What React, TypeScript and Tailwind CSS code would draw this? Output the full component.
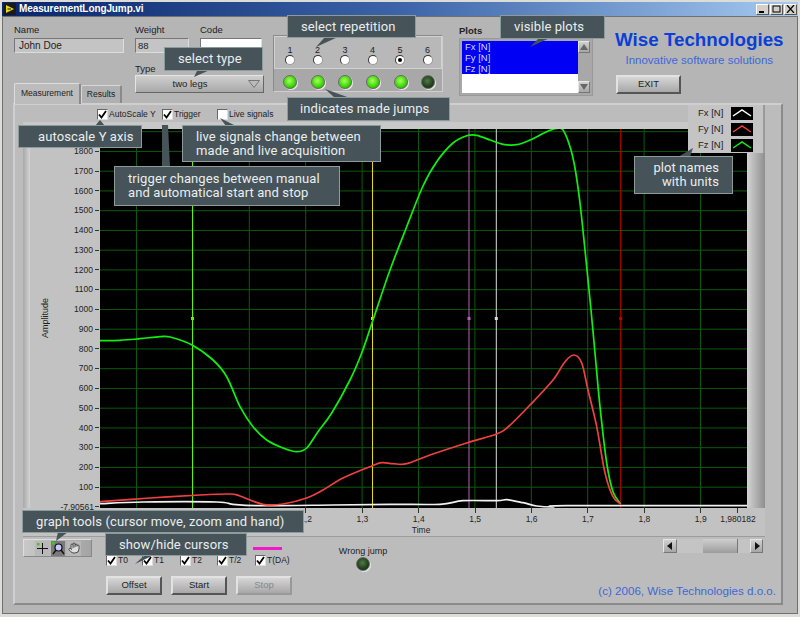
import { Hand } from "lucide-react";

// curve points are read off the graph, in page pixels
const fz = [[100,340.7],[120,340.3],[140,338.7],[160,336.7],[170,337],[192,345],[213,360],[226.7,376.7],[240,406.7],[253,426.7],[266.7,440],[283,448],[296.7,451.7],[306.7,448],[318,431.7],[331.7,413],[350,380],[361.7,353],[373,320],[390,270],[406.7,226.7],[423,186],[436.7,161.7],[453,143],[466.7,135.7],[476.7,135.3],[490,140],[503,144.3],[516.7,144.7],[530,140],[546.7,131.7],[556.7,128.5],[563,130],[570,146.7],[575,168],[580,203],[585,250],[591,310],[595,353],[600,406.7],[606.7,463],[613,491.7],[620.7,504]];
const fy = [[100,501.7],[150,498],[200,495],[230,494],[240,496],[263,504.3],[283,504],[306.7,498],[323,490],[343,478],[371.7,466],[381.7,462.7],[393,463.7],[406.7,463.7],[430,455],[466.7,443],[496.7,434],[508,427],[530,405],[553,380],[565,361.7],[574,355],[581.7,363],[588,390],[596.7,426.7],[605,473],[613,496.7],[620.7,504]];
const fx = [[100,503.7],[143,502],[216.7,502],[233,504.3],[263,505.7],[333,505],[390,504.3],[440,504.3],[463,500.7],[497,500.7],[507,499.7],[523,502.7],[536.7,506],[553,507],[566.7,505.7],[747,505.7]];

function smooth(p: number[][]) {
  let d = `M${p[0][0]} ${p[0][1]}`;
  for (let i = 0; i < p.length - 1; i++) {
    const a = p[Math.max(i - 1, 0)];
    const b = p[i];
    const c = p[i + 1];
    const e = p[Math.min(i + 2, p.length - 1)];
    d += ` C${b[0] + (c[0] - a[0]) / 6} ${b[1] + (c[1] - a[1]) / 6} ${c[0] - (e[0] - b[0]) / 6} ${c[1] - (e[1] - b[1]) / 6} ${c[0]} ${c[1]}`;
  }
  return d;
}

const yLabels = ["1800","1700","1600","1500","1400","1300","1200","1100","1000","900","800","700","600","500","400","300","200","100"];
const xLabels = ["1,2","1,3","1,4","1,5","1,6","1,7","1,8","1,9"];
const reps = [1, 2, 3, 4, 5, 6];

function Check({ label, checked = true, className }: { label: string; checked?: boolean; className: string }) {
  return (
    <div className={`flex items-center gap-[1px] ${className}`}>
      <span className="w-[11px] h-[11px] bg-white border border-t-[#666] border-l-[#666] border-r-[#ddd] border-b-[#ddd] flex items-center justify-center shrink-0">
        {checked && (
          <svg width="9" height="9" viewBox="0 0 9 9">
            <path d="M1 4.5 L3.5 7.5 L8 1" fill="none" stroke="#000" strokeWidth="1.8" />
          </svg>
        )}
      </span>
      <span className="text-[8.5px] leading-none text-[#222] whitespace-nowrap">{label}</span>
    </div>
  );
}

function LvButton({ label, disabled, className }: { label: string; disabled?: boolean; className: string }) {
  return (
    <div
      className={`h-[19px] border-2 border-t-[#e2e2e2] border-l-[#e2e2e2] flex items-center justify-center text-[9.5px] bg-gradient-to-b from-[#d6d6d6] to-[#a8a8a8] ${
        disabled ? "border-r-[#999] border-b-[#999] text-[#888]" : "border-r-[#555] border-b-[#555] text-[#222]"
      } ${className}`}
    >
      {label}
    </div>
  );
}

function Led({ on }: { on: boolean }) {
  return (
    <span
      className={`block w-[14px] h-[14px] rounded-full border border-[#6a6a6a] shadow-[1px_1px_0_#e8e8e8] ${
        on
          ? "bg-[radial-gradient(circle_at_45%_40%,#a8ff60,#38d800_60%,#1d8a00)]"
          : "bg-[radial-gradient(circle_at_45%_40%,#4f7a45,#1c3a18_65%,#0c1c0a)]"
      }`}
    />
  );
}

function Callout({ className, children }: { className: string; children: React.ReactNode }) {
  return (
    <div className={`absolute z-20 bg-[#465359] border border-[#8c9c9c] text-[#e9eeee] text-[13px] leading-[14px] font-['Roboto',sans-serif] tracking-[0.1px] whitespace-nowrap flex flex-col justify-center ${className}`}>
      {children}
    </div>
  );
}

function ArrowBtn({ dir, className }: { dir: "up" | "down" | "left" | "right"; className: string }) {
  const pts = { up: "1,8 9,8 5,2", down: "1,2 9,2 5,8", left: "7,1 7,9 2,5", right: "3,1 3,9 8,5" }[dir];
  return (
    <div className={`bg-gradient-to-b from-[#d0d0d0] to-[#a6a6a6] border border-t-[#e6e6e6] border-l-[#e6e6e6] border-r-[#777] border-b-[#777] flex items-center justify-center ${className}`}>
      <svg width="10" height="10" viewBox="0 0 10 10">
        <polygon points={pts} fill={dir === "up" || dir === "down" ? "#666" : "#111"} />
      </svg>
    </div>
  );
}

function Graph() {
  const hLines = Array.from({ length: 19 }, (_, i) => 131.7 + 19.75 * i);
  const vLines = Array.from({ length: 11 }, (_, i) => 136.5 + 56.4 * i);
  const cursors = [
    [192.5, "#66f000"],
    [372.5, "#e6dc00"],
    [469, "#b860b8"],
    [496.3, "#dcdcdc"],
    [620.7, "#c00000"],
  ] as const;
  return (
    <svg width="647" height="379" viewBox="100 129 647 379" className="block shrink-0 bg-black">
      {hLines.map((y) => (
        <line key={y} x1="100" x2="747" y1={y} y2={y} stroke="#0b5a0b" strokeWidth="1" />
      ))}
      {vLines.map((x) => (
        <line key={x} x1={x} x2={x} y1="129" y2="508" stroke="#0b5a0b" strokeWidth="1" />
      ))}
      {cursors.map(([x, c]) => (
        <g key={x}>
          <line x1={x} x2={x} y1="129" y2="508" stroke={c} strokeWidth="1" />
          <rect x={x - 1.5} y="317" width="3" height="3" fill={c} />
        </g>
      ))}
      <path d={smooth(fx)} fill="none" stroke="#f2f2f2" strokeWidth="1.7" />
      <path d={smooth(fz)} fill="none" stroke="#10f010" strokeWidth="1.7" />
      <path d={smooth(fy)} fill="none" stroke="#f04040" strokeWidth="1.7" />
    </svg>
  );
}

export default function App() {
  return (
    <div className="relative w-[800px] h-[617px] overflow-hidden bg-[#dcdcd8] pt-[2px] px-[2px] pb-[3px] flex flex-col font-['Liberation_Sans',sans-serif] text-[#222]">
      {/* Title bar */}
      <div className="h-[14px] shrink-0 flex items-center bg-gradient-to-r from-[#0a246a] via-[#3d64a8] to-[#a6caf0] pl-[2px] pr-[1px]">
        <svg width="12" height="12" viewBox="0 0 12 12" className="shrink-0">
          <rect width="12" height="12" fill="#1a1a1a" />
          <polygon points="2,2 10,6 2,10" fill="#e8d820" />
          <path d="M3.5 6 H7" stroke="#1a1a1a" strokeWidth="1" />
        </svg>
        <span className="ml-[3px] text-white font-bold text-[10px] leading-none tracking-[-0.1px]">
          MeasurementLongJump.vi
        </span>
        <div className="ml-auto flex gap-[1px]">
          {["min", "max", "close"].map((b) => (
            <div key={b} className="w-[13px] h-[11px] bg-[#d4d0c8] border border-t-white border-l-white border-r-[#555] border-b-[#555] flex items-center justify-center">
              <svg width="9" height="8" viewBox="0 0 9 8">
                {b === "min" && <rect x="1" y="6" width="5" height="2" fill="#000" />}
                {b === "max" && <rect x="1" y="1" width="7" height="6" fill="none" stroke="#000" />}
                {b === "close" && <path d="M1 0 L8 8 M8 0 L1 8" stroke="#000" strokeWidth="1.2" />}
              </svg>
            </div>
          ))}
        </div>
      </div>

      {/* Panel */}
      <div className="flex-1 flex flex-col bg-[#b5b5b5] border border-[#707070] pl-[10px] pr-[14px] pb-[8px]">
        {/* Top controls */}
        <div className="h-[86px] shrink-0 flex">
          <div className="w-[122px] shrink-0 pt-[7px] flex flex-col">
            <span className="text-[9.5px] leading-[12px] ml-[1px]">Name</span>
            <div className="mt-[2px] ml-[1px] w-[110px] h-[15px] bg-[#c4c4c4] border border-t-[#777] border-l-[#777] border-r-[#ddd] border-b-[#ddd] px-[4px] text-[10px] leading-[13px]">
              John Doe
            </div>
            <div className="mt-auto flex items-end ml-[1px]">
              <div className="w-[67px] h-[21px] bg-[#bcbcbc] border-t border-l border-[#dedede] border-r-2 border-r-[#8a8a8a] rounded-t-[2px] flex items-center justify-center text-[8.5px] pb-[2px] -mb-[1px] relative z-[1]">
                Measurement
              </div>
              <div className="w-[41px] h-[18px] bg-[#b0b0b0] border-t border-l border-[#d8d8d8] border-r-2 border-r-[#8a8a8a] rounded-t-[2px] flex items-center justify-center text-[8.5px]">
                Results
              </div>
            </div>
          </div>

          <div className="w-[130px] shrink-0 pt-[7px]">
            <div className="flex">
              <div className="w-[65px]">
                <span className="text-[9.5px] leading-[12px] block">Weight</span>
                <div className="mt-[2px] w-[54px] h-[15px] bg-[#c4c4c4] border border-t-[#777] border-l-[#777] border-r-[#ddd] border-b-[#ddd] px-[2px] text-[9.5px] leading-[13px]">88</div>
              </div>
              <div>
                <span className="text-[9.5px] leading-[12px] block">Code</span>
                <div className="mt-[2px] w-[62px] h-[15px] bg-white border border-t-[#777] border-l-[#777] border-r-[#ddd] border-b-[#ddd]" />
              </div>
            </div>
            <span className="mt-[10px] text-[9.5px] leading-[12px] block">Type</span>
            <div className="w-[129px] h-[18px] border border-t-[#e4e4e4] border-l-[#e4e4e4] border-r-[#666] border-b-[#666] bg-gradient-to-b from-[#cfcfcf] to-[#a9a9a9] flex items-center relative">
              <span className="flex-1 text-center text-[9.5px] pr-[4px]">two legs</span>
              <svg width="12" height="8" viewBox="0 0 12 8" className="mr-[3px]">
                <polygon points="0.5,0.5 11.5,0.5 6,7.5" fill="#bbb" stroke="#777" />
              </svg>
            </div>
          </div>

          {/* Repetition */}
          <div className="ml-[8px] mt-[18px] w-[170px] h-[57px] shrink-0 bg-[#a8a8a8] border border-t-[#8a8a8a] border-l-[#8a8a8a] border-r-[#cfcfcf] border-b-[#cfcfcf]">
            <div className="h-[33px] grid grid-cols-6 border border-[#d2d2d2] bg-[#b8b8b8] pl-[1px] pt-[9px]">
              {reps.map((n) => (
                <div key={n} className="flex flex-col items-center w-[28px]">
                  <span className="text-[9px] leading-[9px]">{n}</span>
                  <span className="w-[10px] h-[10px] rounded-full bg-white border border-t-[#333] border-l-[#333] border-r-[#999] border-b-[#999] flex items-center justify-center">
                    {n === 5 && <span className="w-[4px] h-[4px] rounded-full bg-black" />}
                  </span>
                </div>
              ))}
            </div>
            <div className="grid grid-cols-6 pl-[2px] pt-[6px]">
              {reps.map((n) => (
                <div key={n} className="flex justify-center w-[28px]">
                  <Led on={n !== 6} />
                </div>
              ))}
            </div>
          </div>

          {/* Plots */}
          <div className="ml-[16px] w-[135px] shrink-0 pt-[8px]">
            <span className="text-[9.5px] leading-[12px] font-bold block">Plots</span>
            <div className="mt-[1px] w-[134px] h-[58px] flex bg-[#a8a8a8] p-[2px] border border-[#9a9a9a]">
              <div className="w-[116px] bg-white flex flex-col">
                <div className="h-[33px] bg-[#0000f5] text-[#d8dcff] text-[9.5px] leading-[11px] pl-[3px]">
                  <div>Fx [N]</div>
                  <div>Fy [N]</div>
                  <div>Fz [N]</div>
                </div>
              </div>
              <div className="flex-1 flex flex-col justify-between items-end">
                <ArrowBtn dir="up" className="w-[12px] h-[12px]" />
                <ArrowBtn dir="down" className="w-[12px] h-[12px]" />
              </div>
            </div>
          </div>

          {/* Brand */}
          <div className="ml-[21px] flex-1 pt-[11px] flex flex-col">
            <div className="text-center font-bold text-[18.8px] leading-[24px] text-[#0b3fd6] whitespace-nowrap">
              Wise Technologies
            </div>
            <div className="text-center text-[11.5px] leading-[14px] text-[#3d68d8] mt-[1px] whitespace-nowrap">
              Innovative software solutions
            </div>
            <LvButton label="EXIT" className="mt-[8px] ml-[1px] w-[65px]" />
          </div>
        </div>

        {/* Tab panel */}
        <div className="flex-1 flex flex-col bg-[#bcbcbc] border-2 border-t-[#cfcfcf] border-l-[#cfcfcf] border-r-[#8a8a8a] border-b-[#8a8a8a] pl-[8px]">
          <div className="h-[17px] shrink-0 flex items-start pt-[4px] pl-[74px]">
            <Check label="AutoScale Y" className="w-[65px]" />
            <Check label="Trigger" className="w-[55px]" />
            <Check label="Live signals" checked={false} className="w-[70px]" />
          </div>

          {/* Graph bezel */}
          <div className="w-[742px] h-[415px] shrink-0 bg-[#c2c2c2] flex flex-col border-b border-[#9c9c9c]">
            <div className="h-[7px] shrink-0 bg-[#c8c8c8]" />
            <div className="flex h-[379px] shrink-0">
              <div className="w-[77px] shrink-0 flex">
                <div className="w-[9px] bg-gradient-to-r from-[#a8a8a8] to-[#d4d4d4]" />
                <div className="w-[38px] flex items-center justify-center">
                  <span className="[writing-mode:vertical-rl] rotate-180 text-[9px] leading-none">Amplitude</span>
                </div>
                <div className="flex-1 flex flex-col pt-[12.6px] pr-[1px]">
                  {yLabels.map((l) => (
                    <div key={l} className="h-[19.75px] shrink-0 flex items-center justify-end gap-[2px]">
                      <span className="text-[8.5px] leading-none">{l}</span>
                      <span className="w-[4px] h-[1px] bg-[#333]" />
                    </div>
                  ))}
                  <div className="h-[19.75px] shrink-0 flex items-center justify-end gap-[1px]">
                    <span className="text-[8.5px] leading-none whitespace-nowrap">-7,90561</span>
                    <span className="w-[4px] h-[1px] bg-[#333]" />
                  </div>
                </div>
              </div>
              <Graph />
              <div className="w-[18px] shrink-0 bg-gradient-to-r from-[#d4d4d4] to-[#8f8f8f]" />
            </div>
            <div className="flex-1 pl-[254.8px] relative">
              <div className="flex h-[17px]">
                {xLabels.map((l) => (
                  <div key={l} className="w-[56.4px] shrink-0 flex flex-col items-center">
                    <span className="w-[1px] h-[5px] bg-[#333]" />
                    <span className="text-[8.5px] leading-[12px]">{l}</span>
                  </div>
                ))}
                <div className="w-[18px] shrink-0 flex flex-col items-center">
                  <span className="w-[1px] h-[5px] bg-[#333]" />
                  <span className="text-[8.5px] leading-[12px] whitespace-nowrap">1,980182</span>
                </div>
              </div>
              <div className="text-[8.5px] leading-[11px] pl-[134px]">Time</div>
            </div>
          </div>

          {/* Bottom controls */}
          <div className="flex-1 flex">
            <div className="w-[83px] shrink-0 pt-[2px]">
              <div className="w-[69px] h-[18px] bg-gradient-to-r from-[#c8c8c8] to-[#a4a4a4] border border-t-[#dedede] border-l-[#dedede] border-r-[#888] border-b-[#888] flex items-center justify-end gap-[2px] pr-[10px]">
                <div className="w-[14px] h-[15px] bg-[#b8b8b8] flex items-center justify-center">
                  <svg width="13" height="13" viewBox="0 0 13 13">
                    <path d="M6.5 1 V12 M1 6.5 H12" stroke="#111" strokeWidth="1" />
                    <rect x="1" y="1" width="2.5" height="2.5" fill="#3cd000" />
                  </svg>
                </div>
                <div className="w-[14px] h-[15px] bg-[#7a7a7a] flex items-center justify-center">
                  <svg width="13" height="13" viewBox="0 0 13 13">
                    <circle cx="6.5" cy="5.5" r="3.5" fill="#c8c8ff" stroke="#111" strokeWidth="1.2" />
                    <path d="M9 8 L12 12 M4 8 L1 12" stroke="#111" strokeWidth="1.4" />
                    <rect x="0" y="0" width="2.5" height="2.5" fill="#3cd000" />
                  </svg>
                </div>
                <div className="w-[14px] h-[15px] bg-[#b8b8b8] flex items-center justify-center">
                  <Hand size={12} strokeWidth={1.5} color="#222" fill="#ddd" />
                </div>
              </div>
            </div>

            <div className="w-[234px] shrink-0 relative pt-[17px]">
              <div className="absolute left-[147px] top-[10px] w-[29px] h-[3px] bg-[#f018c8]" />
              <div className="flex h-[22px] items-start pt-[1px]">
                <Check label="T0" className="w-[36px]" />
                <Check label="T1" className="w-[38px]" />
                <Check label="T2" className="w-[37px]" />
                <Check label="T/2" className="w-[38px]" />
                <Check label="T(DA)" className="w-[60px]" />
              </div>
              <div className="flex gap-[9px]">
                <LvButton label="Offset" className="w-[56px]" />
                <LvButton label="Start" className="w-[56px]" />
                <LvButton label="Stop" disabled className="w-[56px]" />
              </div>
            </div>

            <div className="w-[46px] shrink-0 pt-[8px] flex flex-col items-center">
              <span className="text-[9px] leading-[12px] whitespace-nowrap">Wrong jump</span>
              <span className="block">
                <Led on={false} />
              </span>
            </div>

            <div className="flex-1 flex flex-col pr-[18px] pb-[5px]">
              <div className="mt-[2px] ml-auto w-[100px] h-[14px] flex bg-[#c4c4c4]">
                <ArrowBtn dir="left" className="w-[14px] h-[14px]" />
                <div className="ml-[26px] w-[35px] h-[14px] bg-gradient-to-b from-[#cfcfcf] to-[#9c9c9c] border-r border-[#777]" />
                <div className="flex-1" />
                <ArrowBtn dir="right" className="w-[13px] h-[14px]" />
              </div>
              <div className="mt-auto ml-auto -mr-[13px] text-[11.6px] leading-[14px] text-[#3d68d8] whitespace-nowrap">
                (c) 2006, Wise Technologies d.o.o.
              </div>
            </div>
          </div>
        </div>
      </div>

      {/* Plot legend sits over the graph */}
      <div className="absolute z-10 left-[688px] top-[105px] w-[77px] h-[48px] bg-[#c4c4c4] border-r-2 border-[#9a9a9a] flex flex-col justify-center gap-[3px] pl-[10px]">
        {[["Fx [N]", "#ffffff"], ["Fy [N]", "#f04040"], ["Fz [N]", "#10f010"]].map(([name, c]) => (
          <div key={name} className="flex items-center h-[13px]">
            <span className="w-[33px] text-[9.5px] leading-none">{name}</span>
            <svg width="22" height="13" viewBox="0 0 22 13" className="bg-black shrink-0">
              <path d="M2 9 L11 3 L20 9" fill="none" stroke={c} strokeWidth="1.5" />
            </svg>
          </div>
        ))}
      </div>

      {/* Callout tails */}
      <svg className="absolute inset-0 z-20 pointer-events-none" width="800" height="617">
        <g fill="#465359">
          <polygon points="325,37 338,37 316,47" />
          <polygon points="198,69 212,69 194,77" />
          <polygon points="540,37 552,37 530,47" />
          <polygon points="335,98 350,98 325,89" />
          <polygon points="95,126 105,126 100,120" />
          <polygon points="220,118 236,126 226,126" />
          <polygon points="162,125 168,125 170,167 162,167" />
          <polygon points="678,157 690,157 693,148" />
          <polygon points="58,532 68,532 56,541" />
          <polygon points="135,564 146,554 156,554" />
        </g>
      </svg>

      {/* Callouts */}
      <Callout className="left-[287px] top-[15px] w-[129px] h-[23px] pl-[13px]">select repetition</Callout>
      <Callout className="left-[164px] top-[47px] w-[99px] h-[24px] pl-[13px]">select type</Callout>
      <Callout className="left-[500px] top-[15px] w-[105px] h-[24px] pl-[13px]">visible plots</Callout>
      <Callout className="left-[287px] top-[97px] w-[163px] h-[24px] pl-[12px]">indicates made jumps</Callout>
      <Callout className="left-[18px] top-[125px] w-[124px] h-[23px] pl-[19px]">autoscale Y axis</Callout>
      <Callout className="left-[182px] top-[125px] w-[199px] h-[37px] pl-[13px]">
        <span>live signals change between</span>
        <span>made and live acquisition</span>
      </Callout>
      <Callout className="left-[114px] top-[166px] w-[226px] h-[40px] pl-[13px]">
        <span>trigger changes between manual</span>
        <span>and automatical start and stop</span>
      </Callout>
      <Callout className="left-[634px] top-[156px] w-[99px] h-[38px] items-end pr-[13px]">
        <span>plot names</span>
        <span>with units</span>
      </Callout>
      <Callout className="left-[22px] top-[510px] w-[282px] h-[23px] pl-[13px]">graph tools (cursor move, zoom and hand)</Callout>
      <Callout className="left-[105px] top-[533px] w-[142px] h-[23px] pl-[13px]">show/hide cursors</Callout>
    </div>
  );
}
